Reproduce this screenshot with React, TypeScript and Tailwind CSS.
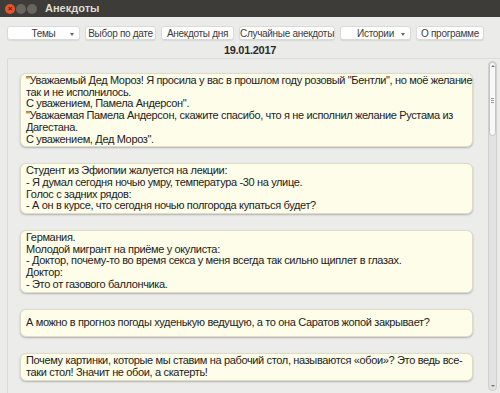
import React from 'react'

const FONT = { fontFamily: '"Liberation Sans", "DejaVu Sans", sans-serif' }

const jokes: string[][] = [
  [
    '"Уважаемый Дед Мороз! Я просила у вас в прошлом году розовый "Бентли", но моё желание',
    'так и не исполнилось.',
    'С уважением, Памела Андерсон".',
    '"Уважаемая Памела Андерсон, скажите спасибо, что я не исполнил желание Рустама из',
    'Дагестана.',
    'С уважением, Дед Мороз".',
  ],
  [
    'Студент из Эфиопии жалуется на лекции:',
    '- Я думал сегодня ночью умру, температура -30 на улице.',
    'Голос с задних рядов:',
    '- А он в курсе, что сегодня ночью полгорода купаться будет?',
  ],
  [
    'Германия.',
    'Молодой мигрант на приёме у окулиста:',
    '- Доктор, почему-то во время секса у меня всегда так сильно щиплет в глазах.',
    'Доктор:',
    '- Это от газового баллончика.',
  ],
  ['А можно в прогноз погоды худенькую ведущую, а то она Саратов жопой закрывает?'],
  [
    'Почему картинки, которые мы ставим на рабочий стол, называются «обои»? Это ведь все-',
    'таки стол! Значит не обои, а скатерть!',
  ],
]

function Btn({ label, arrow, w }: { label: string; arrow?: boolean; w: string }) {
  return (
    <div
      className={`relative flex h-[14px] ${w} items-center justify-center whitespace-nowrap rounded-[3px] border border-[#dadada] bg-white text-[10px] tracking-[-0.3px] text-[#3a3a3a] shadow-[0_1px_1px_rgba(0,0,0,0.08)]`}
    >
      <span>{label}</span>
      {arrow && (
        <span className="absolute right-[5px] top-[6px] h-0 w-0 border-x-[2.5px] border-t-[3px] border-x-transparent border-t-[#666]" />
      )}
    </div>
  )
}

export default function App() {
  return (
    <div className="flex h-[393px] w-[500px] flex-col overflow-hidden bg-[#ebebea]" style={FONT}>
      {/* заголовок окна */}
      <div className="flex h-[17px] shrink-0 items-center bg-[#3d3c38] pl-[5px]">
        <span className="flex h-[10px] w-[10px] items-center justify-center rounded-full bg-[#e3562a] text-[8px] font-bold leading-none text-[#5a1a0a]">
          ×
        </span>
        <span className="ml-[1px] h-[10px] w-[10px] rounded-full bg-[#66655f]" />
        <span className="ml-[1px] h-[10px] w-[10px] rounded-full bg-[#66655f]" />
        <span className="ml-[8px] text-[11px] font-bold text-[#dfdbd2]">Анекдоты</span>
      </div>

      {/* кнопки */}
      <div className="mt-[9px] flex shrink-0 gap-[5px] pl-[7px]">
        <Btn label="Темы" arrow w="w-[73px]" />
        <Btn label="Выбор по дате" w="w-[71px]" />
        <Btn label="Анекдоты дня" w="w-[73px]" />
        <Btn label="Случайные анекдоты" w="w-[96px]" />
        <Btn label="Истории" arrow w="w-[71px]" />
        <Btn label="О программе" w="w-[68px]" />
      </div>

      <div className="mt-[3px] shrink-0 text-center text-[11px] font-bold leading-[14px] tracking-[-0.3px] text-[#2b2b2b]">
        19.01.2017
      </div>

      {/* список */}
      <div className="ml-[7px] mt-[1px] flex min-h-0 flex-1 overflow-hidden border-l border-t border-[#dcdcdc] bg-[#ececeb]">
        <div className="flex flex-1 flex-col gap-[16px] pl-[12px] pt-[14px]">
          {jokes.map((lines, i) => (
            <div
              key={i}
              className="flex min-h-[28px] w-[453px] flex-col justify-center rounded-[6px] border border-[#dedbc9] bg-[#fefde9] px-[5px] py-[1px] text-[11px] leading-[11.7px] tracking-[-0.35px] whitespace-nowrap text-[#222] shadow-[0_1px_2px_rgba(0,0,0,0.25)]"
            >
              {lines.map((l, j) => (
                <div key={j}>{l}</div>
              ))}
            </div>
          ))}
        </div>
        {/* полоса прокрутки */}
        <div className="mb-[2px] mr-[3px] mt-[2px] flex w-[9px] flex-col items-center rounded-[4px] border border-[#cfcfcf] bg-[#e2e2e2]">
          <div className="flex h-[74px] w-[7px] flex-col items-center justify-between rounded-[4px] border border-[#c4c4c4] bg-[#f8f8f8] py-[2px]">
            <span className="h-0 w-0 border-x-[2px] border-b-[2px] border-x-transparent border-b-[#777]" />
            <span className="flex flex-col gap-[1px]">
              <span className="h-px w-[3px] bg-[#999]" />
              <span className="h-px w-[3px] bg-[#999]" />
              <span className="h-px w-[3px] bg-[#999]" />
            </span>
            <span />
          </div>
          <div className="flex-1" />
          <span className="mb-[3px] h-0 w-0 border-x-[2px] border-t-[2px] border-x-transparent border-t-[#777]" />
        </div>
      </div>
    </div>
  )
}
